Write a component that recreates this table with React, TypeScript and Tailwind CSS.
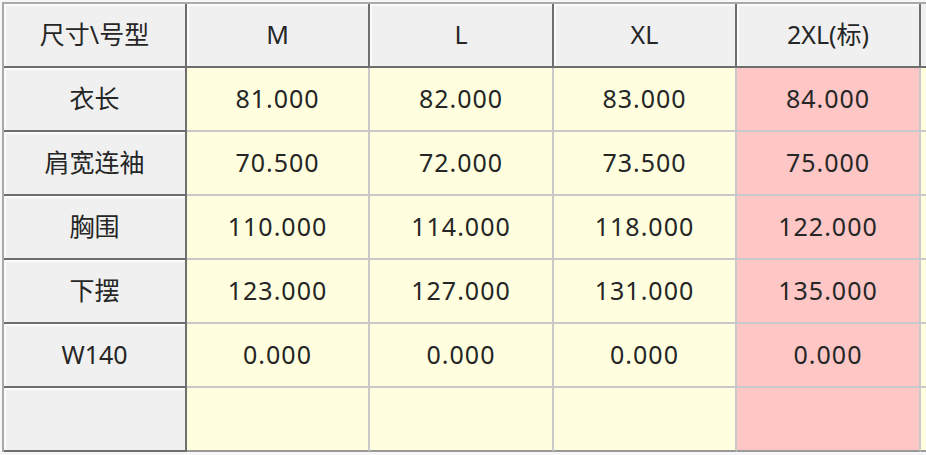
const sizes = ['M', 'L', 'XL', '2XL(标)'];

const rows: { label: string; values: string[] }[] = [
  { label: '衣长', values: ['81.000', '82.000', '83.000', '84.000'] },
  { label: '肩宽连袖', values: ['70.500', '72.000', '73.500', '75.000'] },
  { label: '胸围', values: ['110.000', '114.000', '118.000', '122.000'] },
  { label: '下摆', values: ['123.000', '127.000', '131.000', '135.000'] },
  { label: 'W140', values: ['0.000', '0.000', '0.000', '0.000'] },
  { label: '', values: ['', '', '', ''] },
];

const font = { fontFamily: '"Noto Sans", "Noto Sans CJK SC", sans-serif' };

export default function App() {
  return (
    <div className="w-[926px] h-[455px] overflow-hidden bg-[#f7f7f7] pt-[2px] pl-[2px]" style={font}>
      <div className="border-t-2 border-l-2 border-[#a9a9a9] bg-[#f0f0f0] text-[25px] text-[#262626]">
        <div className="grid grid-cols-[183px_183px_184px_183px_184px_1fr]">
          {/* 表头 */}
          <HeadCell text="尺寸\号型" />
          {sizes.map((s) => (
            <HeadCell key={s} text={s} />
          ))}
          <div className="h-[64px] bg-[#f0f0f0] border-b-2 border-[#6e6e6e]" />

          {rows.map((r, i) => (
            <Row key={i} label={r.label} values={r.values} last={i === rows.length - 1} />
          ))}
        </div>
      </div>
    </div>
  );
}

function HeadCell({ text }: { text: string }) {
  return (
    <div className="h-[64px] flex items-center justify-center bg-[#f0f0f0] border-r-2 border-b-2 border-[#6e6e6e] shadow-[inset_2px_2px_0_#fbfbfb]">
      {text}
    </div>
  );
}

function Row({ label, values, last }: { label: string; values: string[]; last: boolean }) {
  return (
    <>
      <div className="h-[64px] flex items-center justify-center bg-[#f0f0f0] border-r-2 border-b-2 border-[#6e6e6e] shadow-[inset_2px_2px_0_#fbfbfb]">
        {label}
      </div>
      {values.map((v, j) => (
        <div
          key={j}
          className={`h-[64px] flex items-center justify-center tracking-[1px] border-r-2 border-b-2 ${
            last ? 'border-b-[#9a9a9a]' : 'border-b-[#c9c9c9]'
          } border-r-[#c9c9c9] ${j === 3 ? 'bg-[#ffc6c6]' : 'bg-[#ffffe0]'}`}
        >
          {v}
        </div>
      ))}
      <div className={`h-[64px] bg-[#ffffe0] border-b-2 ${last ? 'border-[#9a9a9a]' : 'border-[#c9c9c9]'}`} />
    </>
  );
}
